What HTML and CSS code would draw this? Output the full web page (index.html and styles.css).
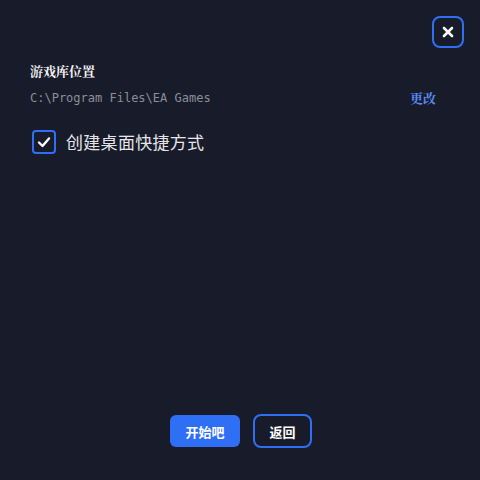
FILE: index.html
```html
<!DOCTYPE html>
<html lang="zh-CN">
<head>
    <meta charset="UTF-8">
    <meta name="viewport" content="width=device-width, initial-scale=1.0">
    <title>安装选项</title>
    <link rel="stylesheet" href="styles.css">
</head>
<body>
    <div class="install-dialog">
        <div class="dialog-top">
            <button type="button" class="close-button" aria-label="关闭">
                <svg width="12" height="12" viewBox="0 0 12 12">
                    <path d="M2 2 L10 10 M10 2 L2 10" stroke="#fff" stroke-width="2.6" stroke-linecap="round"/>
                </svg>
            </button>
        </div>

        <div class="dialog-body">
            <div class="section-title">游戏库位置</div>
            <div class="location-row">
                <span class="location-path">C:\Program Files\EA Games</span>
                <a href="#" class="change-link">更改</a>
            </div>

            <label class="check-row">
                <span class="check-box">
                    <svg width="16" height="16" viewBox="0 0 16 16">
                        <path d="M3 8.5 L6.5 12 L13 4.5" fill="none" stroke="#fff" stroke-width="2.4" stroke-linecap="round" stroke-linejoin="round"/>
                    </svg>
                </span>
                <span class="check-label">创建桌面快捷方式</span>
            </label>
        </div>

        <div class="button-container">
            <button type="button" class="start-button">开始吧</button>
            <button type="button" class="back-button">返回</button>
        </div>
    </div>
</body>
</html>
```

FILE: styles.css
```css
:root {
    --primary: #2f6ff6;
    --bg: #181b29;
    --text: #e6e6ea;
    --muted: #8b8e98;
    --link: #5a8bf2;
}

body {
    margin: 0;
    padding: 0;
    background: var(--bg);
    color: var(--text);
    font-family: "Noto Sans", "Noto Sans CJK SC", sans-serif;
}

.install-dialog {
    height: 480px;
    box-sizing: border-box;
    display: flex;
    flex-direction: column;
    padding: 16px 16px 32px 30px;
}

.dialog-top {
    display: flex;
    justify-content: flex-end;
}

.close-button {
    width: 32px;
    height: 32px;
    padding: 0;
    background: transparent;
    border: 2px solid var(--primary);
    border-radius: 8px;
    display: flex;
    align-items: center;
    justify-content: center;
    cursor: pointer;
}

.dialog-body {
    flex: 1;
    padding-right: 27px;
}

.section-title {
    margin-top: 14px;
    font-family: "Noto Serif CJK SC", "Noto Sans CJK SC", serif;
    font-size: 13px;
    font-weight: bold;
    line-height: 18px;
    color: #f2f2f4;
}

.location-row {
    display: flex;
    justify-content: space-between;
    align-items: center;
    margin-top: 8px;
    height: 19px;
}

.location-path {
    font-family: "DejaVu Sans Mono", monospace;
    font-size: 12px;
    color: var(--muted);
}

.change-link {
    font-family: "Noto Serif CJK SC", "Noto Sans CJK SC", serif;
    font-size: 13px;
    font-weight: bold;
    color: var(--link);
    text-decoration: none;
    margin-right: 1px;
}

.check-row {
    display: flex;
    align-items: center;
    gap: 10px;
    margin-top: 22px;
    margin-left: 2px;
    cursor: pointer;
}

.check-box {
    width: 24px;
    height: 24px;
    box-sizing: border-box;
    border: 2px solid var(--primary);
    border-radius: 4px;
    display: flex;
    align-items: center;
    justify-content: center;
}

.check-label {
    font-family: "Noto Sans CJK SC", sans-serif;
    font-size: 17px;
    letter-spacing: 0.3px;
    color: var(--text);
}

.button-container {
    display: flex;
    justify-content: center;
    align-items: center;
    gap: 13px;
    padding-right: 12px;
}

.start-button {
    width: 70px;
    height: 32px;
    background: var(--primary);
    color: white;
    border: none;
    border-radius: 6px;
    font-family: "Noto Sans CJK SC", sans-serif;
    font-size: 13px;
    font-weight: bold;
    cursor: pointer;
}

.back-button {
    width: 59px;
    height: 34px;
    background: transparent;
    color: white;
    border: 2px solid var(--primary);
    border-radius: 8px;
    font-family: "Noto Sans CJK SC", sans-serif;
    font-size: 13px;
    font-weight: bold;
    cursor: pointer;
}
```
